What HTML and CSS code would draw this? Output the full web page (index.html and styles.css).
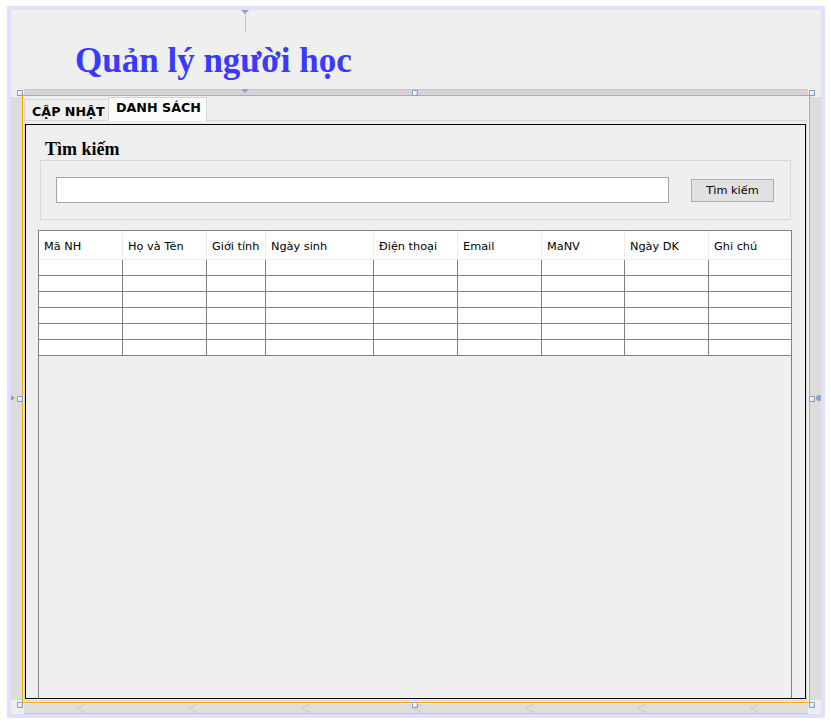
FILE: index.html
```html
<!DOCTYPE html>
<html lang="vi">
<head>
<meta charset="utf-8">
<title>Quản lý người học</title>
<link rel="stylesheet" href="styles.css">
</head>
<body>
<div class="frame">
  <div class="head">
    <h1 class="title">Quản lý người học</h1>
  </div>
  <div class="topbar-row"><div class="topbar"></div></div>
  <div class="mid">
    <div class="side"></div>
    <div class="tabs-box">
      <div class="tabstrip">
        <div class="tab tab-one">CẬP NHẬT</div>
        <div class="tab tab-two">DANH SÁCH</div>
      </div>
      <div class="panel">
        <div class="content">
          <h2 class="section">Tìm kiếm</h2>
          <div class="group">
            <input class="search" type="text">
            <button class="btn" type="button">Tìm kiếm</button>
          </div>
          <div class="pane">
            <div class="grid">
              <div class="th">Mã NH</div><div class="th">Họ và Tên</div><div class="th">Giới tính</div><div class="th">Ngày sinh</div><div class="th">Điện thoại</div><div class="th">Email</div><div class="th">MaNV</div><div class="th">Ngày DK</div><div class="th last">Ghi chú</div>
              <div class="td"></div><div class="td"></div><div class="td"></div><div class="td"></div><div class="td"></div><div class="td"></div><div class="td"></div><div class="td"></div><div class="td last"></div>
              <div class="td"></div><div class="td"></div><div class="td"></div><div class="td"></div><div class="td"></div><div class="td"></div><div class="td"></div><div class="td"></div><div class="td last"></div>
              <div class="td"></div><div class="td"></div><div class="td"></div><div class="td"></div><div class="td"></div><div class="td"></div><div class="td"></div><div class="td"></div><div class="td last"></div>
              <div class="td"></div><div class="td"></div><div class="td"></div><div class="td"></div><div class="td"></div><div class="td"></div><div class="td"></div><div class="td"></div><div class="td last"></div>
              <div class="td"></div><div class="td"></div><div class="td"></div><div class="td"></div><div class="td"></div><div class="td"></div><div class="td"></div><div class="td"></div><div class="td last"></div>
              <div class="td"></div><div class="td"></div><div class="td"></div><div class="td"></div><div class="td"></div><div class="td"></div><div class="td"></div><div class="td"></div><div class="td last"></div>
            </div>
          </div>
        </div>
      </div>
    </div>
    <div class="side"></div>
  </div>
  <div class="bottom-row">
    <div class="bottombar">
      <svg class="chev" width="9" height="9" viewBox="0 0 9 9"><polyline points="8.5,0.5 0.5,4.5 8.5,8.5" fill="none" stroke="#c9c9c9" stroke-width="1"/></svg>
      <svg class="chev" width="9" height="9" viewBox="0 0 9 9"><polyline points="8.5,0.5 0.5,4.5 8.5,8.5" fill="none" stroke="#c9c9c9" stroke-width="1"/></svg>
      <svg class="chev" width="9" height="9" viewBox="0 0 9 9"><polyline points="8.5,0.5 0.5,4.5 8.5,8.5" fill="none" stroke="#c9c9c9" stroke-width="1"/></svg>
      <svg class="chev" width="9" height="9" viewBox="0 0 9 9"><polyline points="8.5,0.5 0.5,4.5 8.5,8.5" fill="none" stroke="#c9c9c9" stroke-width="1"/></svg>
      <svg class="chev" width="9" height="9" viewBox="0 0 9 9"><polyline points="8.5,0.5 0.5,4.5 8.5,8.5" fill="none" stroke="#c9c9c9" stroke-width="1"/></svg>
      <svg class="chev" width="9" height="9" viewBox="0 0 9 9"><polyline points="8.5,0.5 0.5,4.5 8.5,8.5" fill="none" stroke="#c9c9c9" stroke-width="1"/></svg>
      <svg class="chev" width="9" height="9" viewBox="0 0 9 9"><polyline points="8.5,0.5 0.5,4.5 8.5,8.5" fill="none" stroke="#c9c9c9" stroke-width="1"/></svg>
    </div>
  </div>

  <!-- design-time overlays -->
  <div class="tri-down tri-top"></div>
  <div class="dotline"></div>
  <div class="tri-down tri-bar"></div>
  <div class="tri-right"></div>
  <div class="tri-left"></div>
  <div class="handle h-tl"></div>
  <div class="handle h-tm"></div>
  <div class="handle h-tr"></div>
  <div class="handle h-ml"></div>
  <div class="handle h-mr"></div>
  <div class="handle h-bl"></div>
  <div class="handle h-bm"></div>
  <div class="handle h-br"></div>
</div>
</body>
</html>
```

FILE: styles.css
```css
* { box-sizing: border-box; }

body {
  margin: 0;
  background: #ffffff;
  font-family: "DejaVu Sans", Tahoma, sans-serif;
}

.frame {
  position: relative;
  margin: 6px 0 0 7px;
  width: 818px;
  height: 712px;
  border: 4px solid #e0e0fc;
  background: #efefef;
}

.head {
  height: 79px;
  padding: 31px 0 0 64px;
}

.title {
  margin: 0;
  font-family: "Liberation Serif", "Times New Roman", serif;
  font-weight: bold;
  font-size: 35px;
  line-height: 40px;
  color: #3a3aff;
  white-space: nowrap;
}

.topbar-row { height: 6px; }
.topbar {
  margin-left: 13px;
  width: 784px;
  height: 6px;
  background: #d4d4d4;
  border-top: 1px solid #c4c4c4;
}

.mid {
  display: flex;
  height: 608px;
}

.side {
  width: 11px;
  height: 603px;
  margin-top: 2px;
  background: #dcdcdc;
}

.tabs-box {
  width: 788px;
  height: 608px;
  border: 1px solid #ffa500;
  display: flex;
  flex-direction: column;
}

.tabstrip {
  height: 24px;
  padding-left: 1px;
  display: flex;
  align-items: flex-end;
}

.tab {
  font-weight: bold;
  font-size: 12.7px;
  line-height: 15px;
  color: #000;
  padding: 4px 0 0 7px;
  border: 1px solid #d6d6d6;
  border-bottom: 0;
  white-space: nowrap;
}

.tab-one {
  width: 84px;
  height: 21px;
  border-right: 0;
  background: #efefef;
}

.tab-two {
  position: relative;
  z-index: 1;
  width: 99px;
  height: 24px;
  margin-bottom: -1px;
  padding-top: 2px;
  background: #fcfcfc;
}

.panel {
  margin-left: 1px;
  width: 783px;
  height: 581px;
  border: 1px solid #d6d6d6;
  padding: 3px 0 1px 0;
}

.content {
  height: 100%;
  border: 1px solid #000;
  display: flex;
  flex-direction: column;
}

.section {
  margin: 14px 0 0 19px;
  font-family: "Liberation Serif", "Times New Roman", serif;
  font-weight: bold;
  font-size: 18px;
  line-height: 20px;
  color: #000;
}

.group {
  margin: 1px 0 0 14px;
  width: 751px;
  height: 60px;
  flex: none;
  border: 1px solid #d9d9d9;
  display: flex;
  align-items: flex-start;
  padding: 16px 0 0 15px;
}

.search {
  width: 613px;
  height: 26px;
  margin: 0;
  border: 1px solid #a5a5a5;
  background: #fff;
  padding: 0 4px;
  font: 11px "DejaVu Sans", Tahoma, sans-serif;
}

.btn {
  margin: 2px 0 0 22px;
  width: 83px;
  height: 23px;
  padding: 0;
  background: #e1e1e1;
  border: 1px solid #adadad;
  border-radius: 0;
  font-family: "DejaVu Sans", Tahoma, sans-serif;
  font-size: 11.3px;
  line-height: 21px;
  color: #000;
}

.pane {
  margin: 10px 0 0 12px;
  width: 754px;
  flex: 1;
  border: 1px solid #828282;
  border-bottom: 0;
}

.grid {
  display: grid;
  grid-template-columns: 84px 84px 59px 108px 84px 84px 83px 84px 82px;
}

.th {
  height: 29px;
  background: #fff;
  border-right: 1px solid #ebebeb;
  border-bottom: 1px solid #ebebeb;
  padding: 4px 0 0 5px;
  font-size: 11.3px;
  line-height: 24px;
  color: #000;
  white-space: nowrap;
}

.td {
  height: 16px;
  background: #fff;
  border-right: 1px solid #808080;
  border-bottom: 1px solid #808080;
}

.th.last, .td.last { border-right: 0; }

.bottom-row { height: 11px; }
.bottombar {
  margin: 1px 0 0 13px;
  width: 784px;
  height: 10px;
  background: #dedede;
  border-bottom: 1px solid #c6c6c6;
  display: flex;
  align-items: flex-start;
  gap: 103.3px;
  padding-left: 52px;
}

.chev { display: block; flex: none; }

/* design-time overlays (editor markers) */
.tri-down {
  position: absolute;
  left: 230px;
  width: 0;
  height: 0;
  border-left: 4px solid transparent;
  border-right: 4px solid transparent;
  border-top: 4px solid #8aa4c8;
}
.tri-top { top: 0; }
.tri-bar { top: 79px; }

.dotline {
  position: absolute;
  left: 234px;
  top: 4px;
  height: 17px;
  border-left: 1px dotted #8aa4c8;
}

.tri-right {
  position: absolute;
  left: 0;
  top: 385px;
  width: 0;
  height: 0;
  border-top: 3px solid transparent;
  border-bottom: 3px solid transparent;
  border-left: 4px solid #8aa4c8;
}

.tri-left {
  position: absolute;
  left: 805px;
  top: 385px;
  width: 5px;
  height: 6px;
  border-radius: 3px 0 0 3px;
  background: #8aa4c8;
}

.handle {
  position: absolute;
  width: 6px;
  height: 6px;
  border: 1px solid #86a2c4;
  background: linear-gradient(135deg, #ffffff 0%, #e8eef5 60%, #b9cade 100%);
}
.h-tl { left: 6px; top: 80px; }
.h-tm { left: 401px; top: 80px; }
.h-tr { left: 798px; top: 80px; }
.h-ml { left: 6px; top: 386px; }
.h-mr { left: 798px; top: 386px; }
.h-bl { left: 6px; top: 692px; }
.h-bm { left: 401px; top: 692px; }
.h-br { left: 798px; top: 692px; }
```
